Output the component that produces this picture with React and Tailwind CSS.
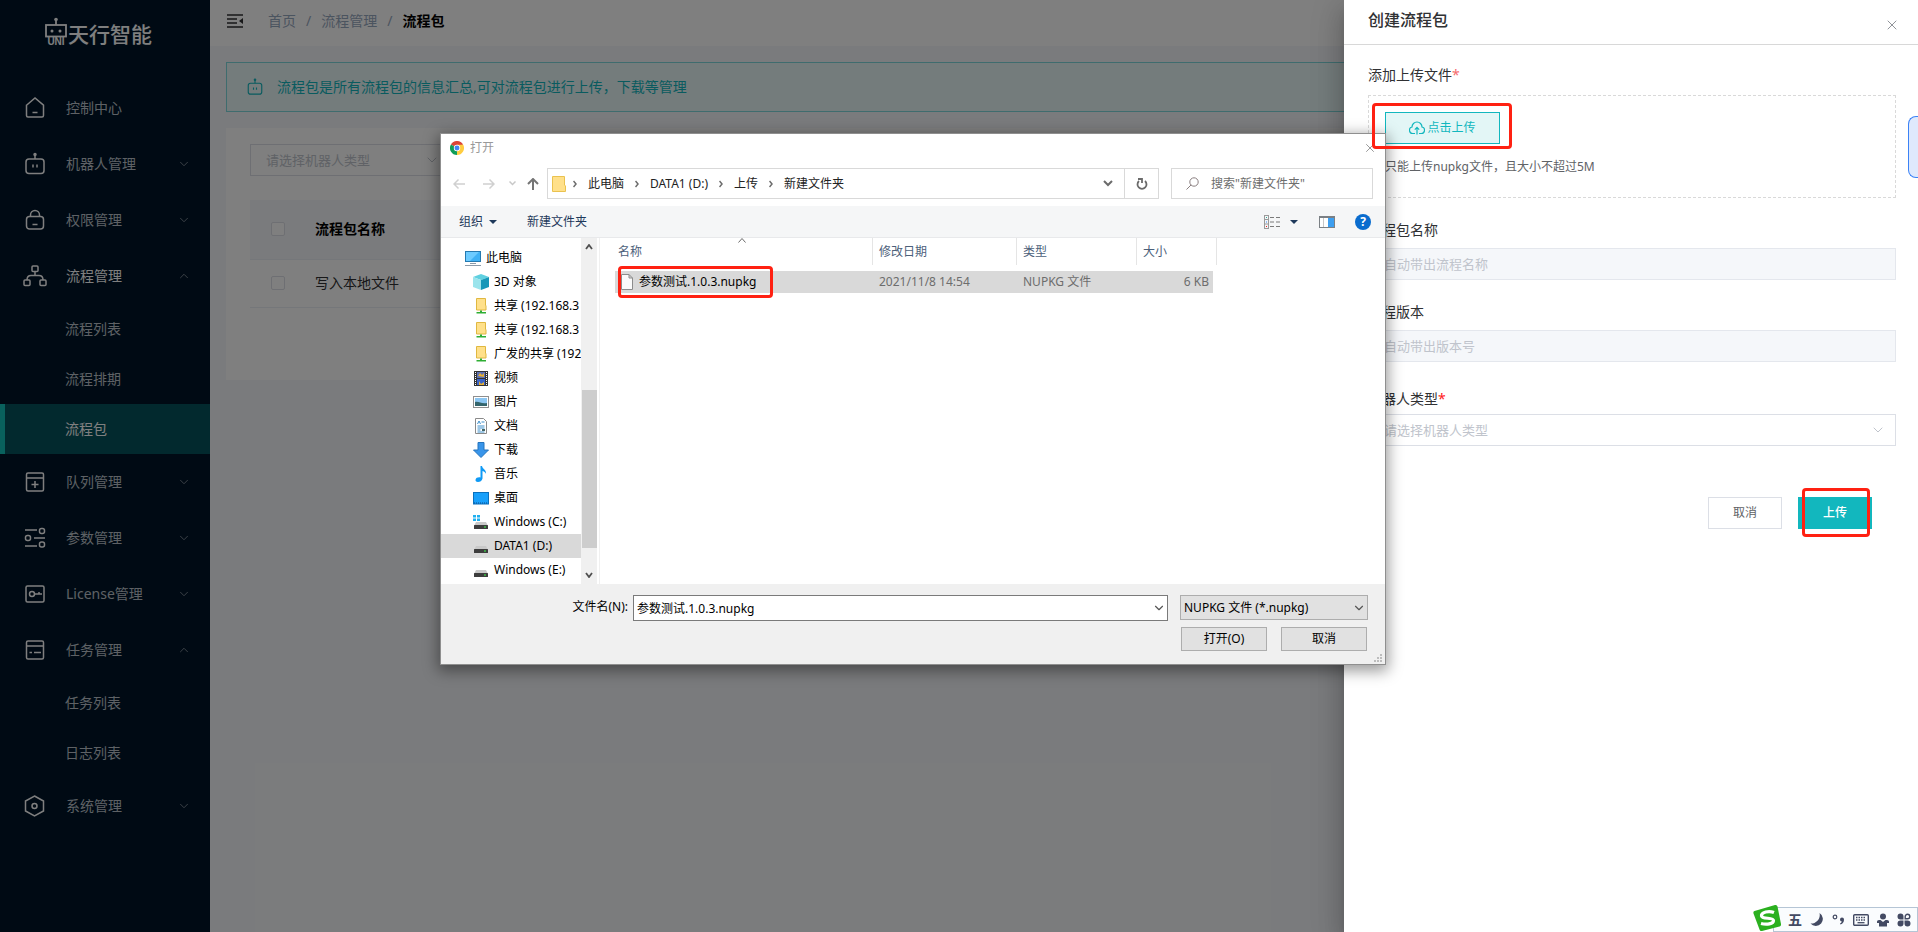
import { ChevronDown, ChevronUp, X } from 'lucide-react';

const menu = [
  { label: '控制中心', icon: 'home' },
  { label: '机器人管理', icon: 'robot', arrow: 'down' },
  { label: '权限管理', icon: 'lock', arrow: 'down' },
  { label: '流程管理', icon: 'flow', arrow: 'up', active: true, children: ['流程列表', '流程排期', '流程包'] },
  { label: '队列管理', icon: 'queue', arrow: 'down' },
  { label: '参数管理', icon: 'params', arrow: 'down' },
  { label: 'License管理', icon: 'license', arrow: 'down' },
  { label: '任务管理', icon: 'task', arrow: 'up', children: ['任务列表', '日志列表'] },
  { label: '系统管理', icon: 'system', arrow: 'down' },
];

const menuIcons = {
  home: <path d="M3.5 9.2 12 2l8.5 7.2v10.3a1.5 1.5 0 0 1-1.5 1.5H5a1.5 1.5 0 0 1-1.5-1.5zM9.5 16.5h5" />,
  robot: (
    <>
      <rect x="3" y="7" width="18" height="14.5" rx="3" />
      <path d="M12 7V2.5M10 12.5v3M14 12.5v3" />
      <circle cx="12" cy="2.4" r="1" fill="currentColor" />
    </>
  ),
  lock: (
    <>
      <rect x="3.5" y="8.5" width="17" height="12.5" rx="3" />
      <path d="M7.5 8.5V7a4.5 4.5 0 0 1 9 0v1.5M9.5 16.5h5" />
    </>
  ),
  flow: (
    <>
      <rect x="9" y="2" width="6" height="5.5" rx="1" />
      <rect x="1" y="16" width="6" height="5.5" rx="1" />
      <rect x="17" y="16" width="6" height="5.5" rx="1" />
      <path d="M12 7.500v4M4 16c0-3 1.500-4.500 4-4.500h8c2.500 0 4 1.500 4 4.500" />
    </>
  ),
  queue: (
    <>
      <rect x="3.500" y="3" width="17" height="18" rx="1.500" />
      <path d="M3.500 8h17M12 11v7M8.500 14.500h7" />
    </>
  ),
  params: (
    <>
      <path d="M2 4h12M11 12h11M2 20h12" />
      <rect x="16.500" y="2.500" width="5" height="5" rx="2" />
      <rect x="2.500" y="9.500" width="5" height="5" rx="2" />
      <rect x="16.500" y="16" width="5" height="5" rx="2" />
    </>
  ),
  license: (
    <>
      <rect x="3" y="4" width="18" height="16" rx="1.500" />
      <circle cx="9" cy="12" r="2.500" />
      <path d="M11.500 12H19M16 12v-2" />
    </>
  ),
  task: (
    <>
      <rect x="3.500" y="3" width="17" height="18" rx="1.500" />
      <path d="M3.500 8h17M6.500 14.500h2.500M11 14.500h7" />
    </>
  ),
  system: (
    <>
      <path d="m11.500 2 9 5v10l-9 5-9-5V7z" />
      <circle cx="11.500" cy="12" r="2.500" />
    </>
  ),
};

function MenuIcon({ name, className }) {
  return (
    <svg viewBox="0 0 24 24" fill="none" stroke="currentColor" strokeWidth="1.500" className={className}>
      {menuIcons[name]}
    </svg>
  );
}

function Logo() {
  return (
    <div className="flex h-20 items-start pl-11 pt-4 text-white">
      <svg viewBox="0 0 24 30" className="h-[30px] w-6" fill="none" stroke="currentColor" strokeWidth="1.800">
        <rect x="2" y="9" width="20" height="11.500" />
        <path d="M12 9V4" />
        <circle cx="12" cy="3.500" r="1.800" fill="currentColor" stroke="none" />
        <circle cx="8" cy="15" r="1.500" fill="currentColor" stroke="none" />
        <circle cx="16" cy="15" r="1.500" fill="currentColor" stroke="none" />
        <text x="12" y="29" textAnchor="middle" fontSize="10" fontWeight="700" fill="currentColor" stroke="none" fontFamily="Liberation Sans, sans-serif">UNI</text>
      </svg>
      <span className="mt-1.5 text-[21px] leading-6 font-medium">天行智能</span>
    </div>
  );
}

function Sidebar() {
  return (
    <aside className="w-[210px] shrink-0 bg-[#001529]">
      <Logo />
      <nav>
        {menu.map(item => (
          <div key={item.label}>
            <a href="#" className={`flex h-14 items-center pl-[23px] pr-[19px] ${item.active ? 'text-white' : 'text-[#bcc3ca]'}`}>
              <MenuIcon name={item.icon} className="h-6 w-6 shrink-0 text-white" />
              <span className="ml-[19px] flex-1">{item.label}</span>
              {item.arrow === 'down' && <ChevronDown className="h-3.5 w-3.5 text-[#87909a]" strokeWidth={1.5} />}
              {item.arrow === 'up' && <ChevronUp className="h-3.5 w-3.5 text-[#87909a]" strokeWidth={1.5} />}
            </a>
            {item.children?.map(child => (
              <a
                key={child}
                href="#"
                className={`flex h-[50px] items-center border-l-[5px] pl-[60px] ${child === '流程包' ? 'border-[#12c3ba] bg-[#05525d] text-white' : 'border-transparent text-[#bcc3ca]'}`}
              >
                {child}
              </a>
            ))}
          </div>
        ))}
      </nav>
    </aside>
  );
}

function Packages() {
  return (
    <div className="flex min-w-0 flex-1 flex-col bg-[#f5f7fa]">
      <header className="flex h-[46px] items-center bg-white pb-1 pl-[17px]">
        <button aria-label="折叠菜单">
          <svg viewBox="0 0 16 14" className="h-3.5 w-4 text-[#303133]" fill="none" stroke="currentColor" strokeWidth="1.5">
            <path d="M0 1h16M0 5h10M0 9h10M0 13h16" />
            <path d="M16 4v6l-4-3z" fill="currentColor" stroke="none" />
          </svg>
        </button>
        <nav className="ml-[25px] flex items-center gap-2.5 text-[#97a8be]">
          <a href="#">首页</a>
          <span>/</span>
          <a href="#">流程管理</a>
          <span>/</span>
          <span className="font-bold text-black">流程包</span>
        </nav>
      </header>
      <main className="flex flex-col gap-4 p-4">
        <div className="flex h-[50px] items-center border border-[#7fd9dc] bg-[#e8f8f8] px-[19px] text-[#12b7be]">
          <MenuIcon name="robot" className="h-[18px] w-[18px]" />
          <span className="ml-[13px]">流程包是所有流程包的信息汇总,可对流程包进行上传，下载等管理</span>
        </div>
        <section className="bg-white px-6 pb-[72px] pt-4">
          <div className="relative w-[196px]">
            <select aria-label="机器人类型" className="h-8 w-full appearance-none border border-[#dcdfe6] bg-white px-[15px] text-[13px] text-[#c0c4cc]">
              <option>请选择机器人类型</option>
            </select>
            <ChevronDown className="absolute right-1.5 top-2 h-4 w-4 text-[#c0c4cc]" strokeWidth={1.5} />
          </div>
          <table className="mt-6 w-full table-fixed text-left">
            <thead>
              <tr className="h-[59px] border-b border-[#ebeef5] bg-[#f5f7fa]">
                <th className="w-[65px] pl-[21px]">
                  <input type="checkbox" aria-label="全选" className="block h-3.5 w-3.5 appearance-none rounded-xs border border-[#dcdfe6] bg-white" />
                </th>
                <th className="text-black">流程包名称</th>
              </tr>
            </thead>
            <tbody>
              <tr className="h-12 border-b border-[#ebeef5]">
                <td className="pl-[21px]">
                  <input type="checkbox" aria-label="写入本地文件" className="block h-3.5 w-3.5 appearance-none rounded-xs border border-[#dcdfe6] bg-white" />
                </td>
                <td className="text-[#303133]">写入本地文件</td>
              </tr>
            </tbody>
          </table>
        </section>
      </main>
    </div>
  );
}

function Drawer() {
  return (
    <aside className="absolute inset-y-0 right-0 w-[574px] bg-white text-[#303133] shadow-[0_8px_10px_-5px_rgba(0,0,0,0.2),0_16px_24px_2px_rgba(0,0,0,0.14),0_6px_30px_5px_rgba(0,0,0,0.12)]">
      <div className="flex h-[45px] items-start justify-between border-b border-[#d8d8d8] pl-6 pr-[18px]">
        <h2 className="mt-2.5 text-base leading-5 font-medium">创建流程包</h2>
        <button aria-label="关闭" className="mt-[17px] text-[#909399]">
          <X className="h-4 w-4" strokeWidth={1.5} />
        </button>
      </div>
      <form className="pl-6 pr-[22px] pt-5 leading-5">
        <div>添加上传文件<span className="text-[#f56c6c]">*</span></div>
        <div className="mt-2.5 border border-dashed border-[#d9d9d9] px-4 pb-5 pt-4 text-xs leading-5">
          <div className="relative w-[115px]">
            <button type="button" className="flex h-8 w-full items-center justify-center gap-0.5 border border-[#12b7be] bg-[#e3f6f6] text-[#12b7be]">
              <svg viewBox="0 0 16 14" className="h-3.5 w-4" fill="none" stroke="currentColor" strokeWidth="1.2">
                <path d="M6 12.500H4A3.300 3.300 0 0 1 3 6a5 5 0 0 1 10 0 3.300 3.300 0 0 1-1 6.500h-2M8 13.500V6.500M5.800 8.600 8 6.400l2.200 2.200" />
              </svg>
              点击上传
            </button>
            <span className="pointer-events-none absolute -bottom-[5px] -left-[13px] -right-3 -top-[9px] z-30 rounded border-[3px] border-[#ff2112]" />
          </div>
          <p className="mt-[13px] text-[#606266]">只能上传nupkg文件，且大小不超过5M</p>
        </div>
        <label htmlFor="pkg-name" className="mt-[22px] block">流程包名称</label>
        <input id="pkg-name" disabled placeholder="自动带出流程名称" className="mt-2 block h-8 w-full border border-[#e4e7ed] bg-[#f5f7fa] px-[15px] text-[13px] placeholder:text-[#c0c4cc]" />
        <label htmlFor="pkg-version" className="mt-[22px] block">流程版本</label>
        <input id="pkg-version" disabled placeholder="自动带出版本号" className="mt-2 block h-8 w-full border border-[#e4e7ed] bg-[#f5f7fa] px-[15px] text-[13px] placeholder:text-[#c0c4cc]" />
        <label htmlFor="robot-type" className="mt-[27px] block">机器人类型<span className="text-[#ff2020]">*</span></label>
        <div className="relative mt-[5px]">
          <select id="robot-type" className="block h-8 w-full appearance-none border border-[#dcdfe6] bg-white px-[15px] text-[13px] text-[#c0c4cc]">
            <option>请选择机器人类型</option>
          </select>
          <ChevronDown className="absolute right-2.5 top-2 h-4 w-4 text-[#c0c4cc]" strokeWidth={1.5} />
        </div>
        <div className="mr-6 mt-[51px] flex justify-end gap-4 text-xs">
          <button type="button" className="h-8 w-[74px] border border-[#dcdfe6] text-[#606266]">取消</button>
          <div className="relative">
            <button type="button" className="h-8 w-[74px] bg-[#12b7be] font-medium text-white">上传</button>
            <span className="pointer-events-none absolute -bottom-2 -top-[9px] left-1 right-0.5 rounded border-[3px] border-[#ff2112]" />
          </div>
        </div>
      </form>
      <span className="absolute right-0 top-[116px] h-[62px] w-2.5 rounded-l-lg border border-r-0 border-[#3b82f6] bg-[#dfe9fc]" />
    </aside>
  );
}

const driveBase = (
  <>
    <path d="M3 8h10l2 4H1z" fill="#c9c9c9" />
    <rect x="1" y="11" width="14" height="4" rx="0.5" fill="#3d3d3d" />
    <rect x="11" y="12.500" width="2" height="1" fill="#3dfa4b" />
  </>
);

const treeIcons = {
  pc: (
    <>
      <rect x="0.500" y="1.500" width="15" height="10" fill="#3fb1f5" stroke="#2579b0" />
      <path d="M1 2h13L5 11H1z" fill="#6dcbff" />
      <path d="M5 13h6v1H5zM0 15h16v1H0z" fill="#8c9aa8" />
    </>
  ),
  cube: (
    <>
      <path d="m8 0 8 3-8 3-8-3z" fill="#5fd0e0" />
      <path d="m0 3 8 3v10l-8-3z" fill="#9be4ec" />
      <path d="m16 3-8 3v10l8-3z" fill="#1597b8" />
    </>
  ),
  share: (
    <>
      <path d="M3.500.500h9V7l.5 1v4h-9.500z" fill="#ffe08a" stroke="#e0b840" />
      <path d="M7 12.500h2V14h4v1.500H3.500V14H7z" fill="#2eae34" />
    </>
  ),
  video: (
    <>
      <rect x="1" y="1" width="14" height="15" fill="#333" />
      <path d="M2.500 2v14M13.500 2v14" stroke="#fff" strokeDasharray="1 1" />
      <rect x="4" y="2" width="8" height="6" fill="#5c6fb3" />
      <rect x="4" y="9" width="8" height="6" fill="#3a64c8" />
      <path d="m5 6 2-3 2 2 2-2v4zM6 11l2 3 3-2v3H6z" fill="#e6b035" />
    </>
  ),
  image: (
    <>
      <rect x="0.500" y="2.500" width="15" height="11" fill="#fff" stroke="#8f8f8f" />
      <rect x="2" y="4" width="12" height="8" fill="#8cc6f2" />
      <path d="M2 8c4-1 6 2 12 1v3H2z" fill="#34656c" />
    </>
  ),
  doc: (
    <>
      <path d="M2.500.500h8l3 3v12h-11z" fill="#fff" stroke="#8a8a8a" />
      <path d="m4.500 6 1.500-3 1.500 3M8.500 4h3M4.500 8h7M4.500 10h7M4.500 12h3M4.500 14h7" stroke="#3d8fcb" fill="none" />
      <path d="M9 11h3v2H9z" fill="#466" />
    </>
  ),
  down: <path d="M5 .5h6V8h4.500L8 15.500.500 8H5z" fill="#3895ea" stroke="#2474bd" />,
  music: <path d="M7.500 0H9c.5 3 4.500 3.500 4 8-.5-1.500-1.500-2.500-3.500-3v7.500C9 15 7 16 5 16s-2.800-1-2.400-2.500C3 12 5 11 7.500 11.500z" fill="#0f9af5" />,
  desktop: (
    <>
      <rect x="0.500" y="2.500" width="15" height="11.500" fill="#18a0fb" stroke="#0a70bd" />
      <path d="M1 13h14" stroke="#0a4b8c" strokeDasharray="1 1" />
    </>
  ),
  winDrive: (
    <>
      {driveBase}
      <path d="M0 1h3v2.500H0zM4 1h3v2.500H4zM0 4.500h3V7H0zM4 4.500h3V7H4z" fill="#1fb0f0" />
    </>
  ),
  drive: driveBase,
};

const tree = [
  { label: '3D 对象', icon: 'cube' },
  { label: '共享 (192.168.3', icon: 'share' },
  { label: '共享 (192.168.3', icon: 'share' },
  { label: '广发的共享 (192', icon: 'share' },
  { label: '视频', icon: 'video' },
  { label: '图片', icon: 'image' },
  { label: '文档', icon: 'doc' },
  { label: '下载', icon: 'down' },
  { label: '音乐', icon: 'music' },
  { label: '桌面', icon: 'desktop' },
  { label: 'Windows (C:)', icon: 'winDrive' },
  { label: 'DATA1 (D:)', icon: 'drive', selected: true },
  { label: 'Windows (E:)', icon: 'drive' },
];

function TreeIcon({ name }) {
  return <svg viewBox="0 0 16 16" className="h-4 w-4 shrink-0">{treeIcons[name]}</svg>;
}

function Caret() {
  return <svg viewBox="0 0 8 4" className="h-1 w-2"><path d="M0 0h8L4 4z" fill="#1e395b" /></svg>;
}

function Crumb({ children }) {
  return (
    <>
      <svg viewBox="0 0 4 8" className="h-2 w-1 shrink-0" fill="none" stroke="#6b6b6b" strokeWidth="1.5"><path d="m.5 1 2.500 3-2.500 3" /></svg>
      <span>{children}</span>
    </>
  );
}

function ChromeIcon() {
  return (
    <svg viewBox="0 0 48 48" className="h-3.5 w-3.5">
      <path d="M24 24 3.200 12A24 24 0 0 1 44.800 12z" fill="#db4437" />
      <path d="M24 24 3.200 12A24 24 0 0 0 24 48z" fill="#0f9d58" />
      <path d="M24 24 44.800 12A24 24 0 0 1 24 48z" fill="#ffcd40" />
      <path d="M24 13h20l1 2-8 9H24z" fill="#ffcd40" />
      <circle cx="24" cy="24" r="11" fill="#fff" />
      <circle cx="24" cy="24" r="8.500" fill="#4285f4" />
    </svg>
  );
}

function AddressBar() {
  return (
    <div className="mt-1.5 flex items-center px-3 text-[#222]">
      <button aria-label="后退">
        <svg viewBox="0 0 12 12" className="h-3 w-3" fill="none" stroke="#d0d0d0" strokeWidth="1.5"><path d="M12 6H1M5.500 1.500 1 6l4.500 4.500" /></svg>
      </button>
      <button aria-label="前进" className="ml-[18px]">
        <svg viewBox="0 0 12 12" className="h-3 w-3" fill="none" stroke="#d0d0d0" strokeWidth="1.5"><path d="M0 6h11M6.500 1.500 11 6l-4.500 4.500" /></svg>
      </button>
      <button aria-label="最近位置" className="ml-3.5">
        <svg viewBox="0 0 7 5" className="h-[5px] w-[7px]" fill="none" stroke="#c8c8c8" strokeWidth="1.500"><path d="m.5.500 3 3 3-3" /></svg>
      </button>
      <button aria-label="向上" className="ml-[11px]">
        <svg viewBox="0 0 12 12" className="h-3 w-3" fill="none" stroke="#757575" strokeWidth="2"><path d="M6 12V1M1 6l5-5 5 5" /></svg>
      </button>
      <div className="ml-2 flex h-[31px] flex-1 items-center border border-[#d9d9d9]">
        <div className="flex flex-1 items-center gap-[11px] pl-1">
          <svg viewBox="0 0 14 16" className="-mr-1 h-4 w-3.5 shrink-0"><path d="M.5.500h12V9l1 1v5.500H.5z" fill="#ffe08a" stroke="#eac24f" /></svg>
          <Crumb>此电脑</Crumb>
          <Crumb>DATA1 (D:)</Crumb>
          <Crumb>上传</Crumb>
          <Crumb>新建文件夹</Crumb>
        </div>
        <button aria-label="展开" className="mr-[11px]">
          <svg viewBox="0 0 10 7" className="h-[7px] w-2.5" fill="none" stroke="#6b6b6b" strokeWidth="2"><path d="m1 1 4 4 4-4" /></svg>
        </button>
        <button aria-label="刷新" className="flex h-full w-[34px] items-center justify-center border-l border-[#d9d9d9]">
          <svg viewBox="0 0 12 12" className="h-3 w-3" fill="none" stroke="#6b6b6b" strokeWidth="1.800"><path d="M9 3A4.500 4.500 0 1 1 3 3M2 1h4v4" /></svg>
        </button>
      </div>
      <div className="ml-3 flex h-[31px] w-[202px] items-center gap-3 border border-[#d9d9d9] pl-3.5">
        <svg viewBox="0 0 13 13" className="h-[13px] w-[13px] shrink-0" fill="none" stroke="#8a7f80"><circle cx="8" cy="5" r="4.200" /><path d="m5 8-4.500 4.500" /></svg>
        <input aria-label="搜索" placeholder={'搜索"新建文件夹"'} className="w-full outline-none placeholder:text-[#6d6d6d]" />
      </div>
    </div>
  );
}

function Toolbar() {
  return (
    <div className="mt-[7px] flex h-8 items-center border-b border-[#e8e9eb] bg-[#f5f6f7] pl-[18px] pr-3.5 text-[#1e395b]">
      <button className="flex items-center gap-1.5">组织<Caret /></button>
      <button className="ml-[30px]">新建文件夹</button>
      <button aria-label="更改视图" className="ml-auto flex items-center gap-2.5">
        <svg viewBox="0 0 16 14" className="h-3.5 w-4" fill="none">
          <rect x="0.500" y="0.500" width="4" height="13" stroke="#9a9a9a" />
          <path d="M.5 4.500h4M.5 9h4" stroke="#9a9a9a" />
          <path d="M6 2.500h10M6 7h10M6 11.500h10" stroke="#7a7a7a" strokeDasharray="4 2" />
          <path d="M2 2h1v1H2z" fill="#3a9" /><path d="M2 6.500h1v1H2z" fill="#38f" /><path d="M2 11h1v1H2z" fill="#e22" />
        </svg>
        <Caret />
      </button>
      <button aria-label="预览窗格" className="ml-[21px]">
        <svg viewBox="0 0 16 12" className="h-3 w-4">
          <rect x="0.500" y="0.500" width="15" height="11" fill="#fff" stroke="#7b8085" />
          <path d="M1 1h14v1H1z" fill="#7b8085" />
          <rect x="9" y="2" width="6" height="9" fill="#3e9ff0" />
          <path d="M4.500 2v9" stroke="#c8c8c8" />
        </svg>
      </button>
      <button aria-label="帮助" className="ml-5 flex h-4 w-4 items-center justify-center rounded-full bg-[#0a6cce] text-xs font-bold text-white">?</button>
    </div>
  );
}

function FileList() {
  return (
    <div className="ml-0.5 flex-1 border-l border-[#f0f0f0] pl-[15px]">
      <table className="table-fixed border-separate border-spacing-0 text-left text-[#6d6d6d]">
        <colgroup>
          <col className="w-[258px]" />
          <col className="w-36" />
          <col className="w-[120px]" />
          <col className="w-20" />
        </colgroup>
        <thead>
          <tr className="text-[#4c607a]">
            <th className="relative p-0 pb-1.5 font-normal">
              <div className="flex h-[27px] items-center border-r border-[#e5e5e5] pl-[3px]">名称</div>
              <svg viewBox="0 0 8 5" className="absolute left-[123px] top-0 h-[5px] w-2" fill="none" stroke="#6b6b6b"><path d="m.5 4.500 3.500-4 3.500 4" /></svg>
            </th>
            <th className="p-0 pb-1.5 font-normal"><div className="flex h-[27px] items-center border-r border-[#e5e5e5] pl-1.5">修改日期</div></th>
            <th className="p-0 pb-1.5 font-normal"><div className="flex h-[27px] items-center border-r border-[#e5e5e5] pl-1.5">类型</div></th>
            <th className="p-0 pb-1.5 font-normal"><div className="flex h-[27px] items-center border-r border-[#e5e5e5] pl-1.5">大小</div></th>
          </tr>
        </thead>
        <tbody>
          <tr className="h-[22px]">
            <td className="relative bg-[#d9d9d9] p-0 text-black">
              <span className="flex items-center gap-1.5 pl-1.5">
                <svg viewBox="0 0 12 16" className="h-4 w-3"><path d="M.5.500h7.500l3.500 3.500v11.500H.5zM8 .5V4h3.500" fill="#fafafa" stroke="#8c8c8c" /></svg>
                参数测试.1.0.3.nupkg
              </span>
              <span className="pointer-events-none absolute -bottom-[5px] -top-[5px] left-[3px] w-[155px] rounded border-[3px] border-[#ff2112]" />
            </td>
            <td className="bg-[#d9d9d9] p-0 pl-1.5">2021/11/8 14:54</td>
            <td className="bg-[#d9d9d9] p-0 pl-1.5">NUPKG 文件</td>
            <td className="border-r-4 border-transparent bg-[#d9d9d9] bg-clip-padding p-0 pr-1 text-right">6 KB</td>
          </tr>
        </tbody>
      </table>
    </div>
  );
}

function OpenDialog() {
  return (
    <div role="dialog" aria-label="打开" className="absolute left-[440px] top-[133px] z-20 w-[946px] border border-[#8f8f8f] bg-white text-xs leading-4 text-black shadow-[0_4px_14px_2px_rgba(0,0,0,0.4)]">
      <div className="flex h-7 items-center pl-[9px] pr-2">
        <ChromeIcon />
        <span className="ml-1.5 text-[#999]">打开</span>
        <button aria-label="关闭对话框" className="ml-auto text-[#8c8c8c]"><X className="h-3.5 w-3.5" strokeWidth={1.5} /></button>
      </div>
      <AddressBar />
      <Toolbar />
      <div className="flex h-[346px]">
        <ul className="w-[140px] overflow-hidden pt-2 whitespace-nowrap">
          <li className="flex h-6 items-center gap-[5px] pl-6"><TreeIcon name="pc" />此电脑</li>
          {tree.map((node, i) => (
            <li key={i} className={`flex h-6 items-center gap-[5px] pl-8 ${node.selected ? 'bg-[#d9d9d9]' : ''}`}>
              <TreeIcon name={node.icon} />
              {node.label}
            </li>
          ))}
        </ul>
        <div className="flex w-4 flex-col items-center bg-[#f0f0f0] py-1.5">
          <svg viewBox="0 0 8 6" className="h-1.5 w-2" fill="none" stroke="#505050" strokeWidth="1.800"><path d="m1 5 3-4 3 4" /></svg>
          <div className="mt-[140px] h-[158px] w-[15px] bg-[#cdcdcd]" />
          <svg viewBox="0 0 8 6" className="mt-auto h-1.5 w-2" fill="none" stroke="#505050" strokeWidth="1.800"><path d="m1 1 3 4 3-4" /></svg>
        </div>
        <FileList />
      </div>
      <div className="relative h-20 bg-[#f0f0f0] pr-[17px] pt-[11px]">
        <div className="flex">
          <label htmlFor="file-name" className="mr-[5px] w-[187px] text-right leading-6">文件名(N):</label>
          <div className="relative flex-1">
            <input id="file-name" defaultValue="参数测试.1.0.3.nupkg" className="block h-[26px] w-full border border-[#7a7a7a] bg-white px-[3px]" />
            <ChevronDown className="absolute right-0.5 top-1.5 h-3.5 w-3.5 text-[#555]" strokeWidth={2} />
          </div>
          <div className="relative ml-3">
            <select aria-label="文件类型" className="block h-[25px] w-[188px] appearance-none border border-[#adadad] bg-[#e1e1e1] px-[3px]">
              <option>NUPKG 文件 (*.nupkg)</option>
            </select>
            <ChevronDown className="absolute right-0.5 top-1.5 h-3.5 w-3.5 text-[#555]" strokeWidth={2} />
          </div>
        </div>
        <div className="mr-px mt-1.5 flex justify-end gap-3.5">
          <button className="h-6 w-[86px] border border-[#adadad] bg-[#e1e1e1]">打开(O)</button>
          <button className="h-6 w-[86px] border border-[#adadad] bg-[#e1e1e1]">取消</button>
        </div>
        <svg viewBox="0 0 8 8" className="absolute bottom-0.5 right-[3px] h-2 w-2" fill="#bdbdbd">
          <path d="M6 0h2v2H6zM3 3h2v2H3zM6 3h2v2H6zM0 6h2v2H0zM3 6h2v2H3zM6 6h2v2H6z" />
        </svg>
      </div>
    </div>
  );
}

function ImeBar() {
  return (
    <div className="absolute bottom-0 right-0 z-30 flex h-7 items-end text-[#434a63]">
      <svg viewBox="0 0 28 28" className="relative z-10 -mr-2 h-7 w-7">
        <path d="M1.500 7 22 1q2-.5 2.500 1.500L28 20q.3 2-1.500 2.500L9 27q-2 .5-2.500-1.500L.5 9.500Q0 7.500 1.500 7z" fill="#2bb01f" />
        <path d="M21 8.500c-5-2-13-.5-12.500 3.500.5 3.500 12 1 12 4.500 0 3.500-7 4.500-12.500 3" fill="none" stroke="#fff" strokeWidth="3.200" />
      </svg>
      <div className="flex h-[25px] items-center border border-[#b5c5d5] bg-[#fafcfe] pl-3.5 pr-1.5">
        <span className="text-sm leading-5 font-bold">五</span>
        <svg viewBox="0 0 14 14" className="ml-2 h-3.5 w-3.5" fill="currentColor"><path d="M9.500 0a7 7 0 1 1-9 10.500A8.500 8.500 0 0 0 9.500 0z" /></svg>
        <svg viewBox="0 0 13 12" className="ml-2 h-3 w-[13px]"><circle cx="3" cy="3" r="1.800" fill="none" stroke="currentColor" strokeWidth="1.200" /><path d="M8 5.500a2 2 0 0 1 4 0c0 2.500-1 4-3.500 5L8 9.500q1.500-.7 1.800-2Q8 7.300 8 5.500z" fill="currentColor" /></svg>
        <svg viewBox="0 0 16 12" className="ml-2 h-3 w-4"><rect x="0.700" y="0.700" width="14.600" height="10.600" rx="1" fill="none" stroke="currentColor" strokeWidth="1.400" /><path d="M3 3.500h10M3 6h10" stroke="currentColor" strokeWidth="1.400" strokeDasharray="1.500 1" /><path d="M4.500 8.700h7" stroke="currentColor" strokeWidth="1.300" /></svg>
        <svg viewBox="0 0 12 14" className="ml-2 h-3.5 w-3" fill="currentColor"><circle cx="6" cy="3.500" r="3" /><path d="M0 8.500q0-1.500 2-1.500h1.500L6 9l2.500-2H10q2 0 2 1.500V10h-2v3.500H2V10H0z" /></svg>
        <svg viewBox="0 0 14 14" className="ml-2 h-3.5 w-3.5" fill="currentColor"><path d="M6.500 6.500h-3a3 3 0 1 1 3-3zM6.500 7.500v3a3 3 0 1 1-3-3zM7.500 7.500h3a3 3 0 1 1-3 3z" /><path d="M8.200 5.800V3.500a2.300 2.300 0 1 1 2.300 2.300z" fill="none" stroke="currentColor" strokeWidth="1.400" /></svg>
      </div>
    </div>
  );
}

export default function App() {
  return (
    <div className="relative flex min-h-screen overflow-hidden font-['Noto_Sans','Noto_Sans_CJK_SC',sans-serif] text-sm leading-5">
      <Sidebar />
      <Packages />
      <div className="absolute inset-0 bg-black/50" />
      <Drawer />
      <OpenDialog />
      <ImeBar />
    </div>
  );
}
